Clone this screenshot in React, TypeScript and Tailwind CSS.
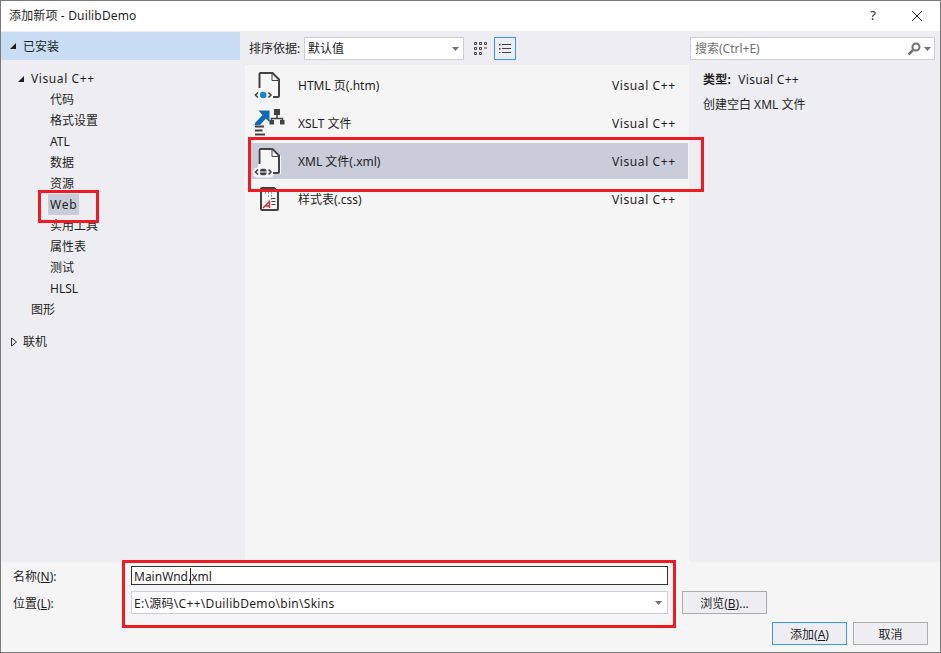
import React from "react";

const FONT = '"Noto Sans", "Noto Sans CJK SC", sans-serif';
const INK = "#424242";
const PAPER = "#f6f6f6";

const Icon = ({ children }: { children: React.ReactNode }) => (
  <svg width="36" height="36" viewBox="0 0 36 36" fill="none">{children}</svg>
);

const HtmlIcon = () => (
  <Icon>
    <path d="M9.500 21V7a1 1 0 0 1 1-1H22.500L29 12.500V29a1 1 0 0 1-1 1H23" fill={PAPER} />
    <path d="M9.500 21V7a1 1 0 0 1 1-1H22.500L29 12.500V29a1 1 0 0 1-1 1H23" stroke={INK} strokeWidth="2" />
    <path d="M22 6.500v7h7" stroke={INK} strokeWidth="1" />
    <path d="M8 25.500L5.500 28 8 30.500M18.500 25.500L21 28l-2.500 2.500" stroke={INK} strokeWidth="1.600" />
    <circle cx="13.200" cy="28" r="3.200" fill="#0e86d4" />
  </Icon>
);

const XsltIcon = () => (
  <Icon>
    <path d="M5 18L12.500 10 8.500 5.500H19.500V17L15.800 13.800 10 20H5z" fill="#1268b3" />
    <rect x="24" y="4" width="6" height="6" fill={INK} />
    <path d="M27 10v3.500M21.500 17v-3.500h11V17" stroke={INK} strokeWidth="1.500" />
    <rect x="19.500" y="15" width="4.500" height="4.500" fill={INK} />
    <rect x="30" y="15" width="4.500" height="4.500" fill={INK} />
    <path d="M5 21.500h9M5 25.500h7.500M5 29.500h10" stroke={INK} strokeWidth="2" />
  </Icon>
);

const XmlIcon = () => (
  <Icon>
    <path d="M8 5h15l8 8v18H8z" fill={PAPER} />
    <rect x="3" y="24.500" width="21" height="10" rx="4.500" fill={PAPER} />
    <path d="M9.500 21V7a1 1 0 0 1 1-1H22.500L29 12.500V29a1 1 0 0 1-1 1H23" stroke={INK} strokeWidth="2" />
    <path d="M22 6.500v7h7" stroke={INK} strokeWidth="1" />
    <path d="M8 26.500L5.500 29 8 31.500M18.500 26.500L21 29l-2.500 2.500" stroke={INK} strokeWidth="1.600" />
    <rect x="10" y="25.800" width="6.500" height="6.400" rx="2" fill={INK} />
    <path d="M10 29h6.500" stroke={PAPER} strokeWidth="1" />
  </Icon>
);

const CssIcon = () => (
  <Icon>
    <path d="M11 8a1 1 0 0 1 1-1h12l4 4v17a1 1 0 0 1-1 1H12a1 1 0 0 1-1-1z" fill={PAPER} stroke={INK} strokeWidth="2" />
    <path d="M15 12h1M18 12h1M21 12h1M18 15h1M21 15h1M21 18h1" stroke={INK} />
    <path d="M21.500 17.500h4M21.500 20.500h4M21.500 23.500h4" stroke={INK} />
    <path d="M13 27L19.500 20.500V27M15.500 25h4" stroke="#d02e3c" strokeWidth="1.400" />
  </Icon>
);

const Caret = ({ open }: { open: boolean }) =>
  open ? (
    <svg width="8" height="8" viewBox="0 0 8 8"><path d="M7 1v6H1z" fill="#1e1e1e" /></svg>
  ) : (
    <svg width="8" height="10" viewBox="0 0 8 10"><path d="M1.500 1l5 4-5 4z" fill="#eeeef2" stroke="#333" /></svg>
  );

const DownTri = () => (
  <svg width="7" height="4" viewBox="0 0 7 4"><path d="M0 0h7L3.500 4z" fill="#717171" /></svg>
);

const treeChildren = ["代码", "格式设置", "ATL", "数据", "资源", "Web", "实用工具", "属性表", "测试", "HLSL"];

const items: { name: string; icon: React.ReactNode; selected?: boolean }[] = [
  { name: "HTML 页(.htm)", icon: <HtmlIcon /> },
  { name: "XSLT 文件", icon: <XsltIcon /> },
  { name: "XML 文件(.xml)", icon: <XmlIcon />, selected: true },
  { name: "样式表(.css)", icon: <CssIcon /> },
];

const RedBox = ({ className }: { className: string }) => (
  <div className={`absolute border-[3px] border-[#ed1c24] pointer-events-none ${className}`} />
);

export default function App() {
  return (
    <div
      className="relative w-[941px] h-[653px] overflow-hidden flex flex-col border-[1px] border-[#7a7a7a] bg-[#f5f5f5] text-[12px] text-[#1e1e1e]"
      style={{ fontFamily: FONT }}
    >
      {/* title bar */}
      <div className="h-[30px] shrink-0 bg-white flex items-center pl-[8px] text-[12px]">
        <span className="flex-1 tracking-[0.15px]">添加新项 - DuilibDemo</span>
        <span className="w-[20px] text-center text-[13px] mr-[28px]">?</span>
        <svg width="12" height="12" viewBox="0 0 12 12" className="mr-[17px]">
          <path d="M1 1l10 10M11 1L1 11" stroke="#1e1e1e" strokeWidth="1" />
        </svg>
      </div>

      {/* main */}
      <div className="h-[531px] shrink-0 flex bg-[#eeeef2]">
        {/* left tree */}
        <div className="w-[244px] shrink-0 pt-[1px]">
          <div className="h-[28px] w-[239px] bg-[#c9def5] flex items-center pl-[8px] gap-[6px]">
            <Caret open />
            <span className="pt-[1px]">已安装</span>
          </div>
          <div className="pt-[8px]">
            <div className="h-[21px] flex items-center pl-[16px] gap-[6px]">
              <Caret open />
              <span className="tracking-[0.6px]">Visual C++</span>
            </div>
            {treeChildren.map((t) => (
              <div key={t} className="h-[21px] flex items-center pl-[47px]">
                <span className={`px-[2px] h-[21px] leading-[21px] ${t === "Web" ? "bg-[#c9ccd9] tracking-[0.8px]" : ""}`}>{t}</span>
              </div>
            ))}
            <div className="h-[21px] flex items-center pl-[30px]">图形</div>
            <div className="h-[21px] mt-[11px] flex items-center pl-[9px] gap-[5px]">
              <Caret open={false} />
              <span>联机</span>
            </div>
          </div>
        </div>

        {/* center */}
        <div className="w-[444px] shrink-0 flex flex-col">
          <div className="h-[34px] shrink-0 flex items-center pl-[4px] pt-[1px]">
            <span className="w-[55px] pt-[1px]">排序依据:</span>
            <div className="w-[160px] h-[23px] bg-white border border-[#cccedb] flex items-center pl-[3px] pr-[4px] justify-between">
              <span className="pt-[1px]">默认值</span>
              <DownTri />
            </div>
            <svg width="14" height="14" viewBox="0 0 14 14" className="ml-[10px]" fill="none" stroke="#424242">
              <path d="M.5.500h2v2h-2zM5.500.500h2v2h-2zM10.500.500h2v2h-2z" />
              <path d="M.5 5.500h2v2h-2zM5.500 5.500h2v2h-2z" />
              <path d="M10 6h3" />
              <path d="M.5 10.500h2v2h-2zM5.500 10.500h2v2h-2z" />
            </svg>
            <div className="ml-[6px] w-[22px] h-[23px] border border-[#3399ff] flex items-center justify-center">
              <svg width="12" height="9" viewBox="0 0 12 9" fill="#424242">
                <path d="M0 0h1.500v1.500H0zM3 0h9v1H3zM0 4h1.500v1.500H0zM3 4h9v1H3zM0 8h1.500v1H0zM3 8h9v1H3z" />
              </svg>
            </div>
          </div>
          <div className="flex-1 bg-[#f5f5f5] pt-[1px] pl-[3px] pr-[1px]">
            {items.map((it) => (
              <div key={it.name} className="h-[38px] flex items-center">
                <div className={`w-[440px] h-[36px] flex items-center ${it.selected ? "bg-[#c9ccd9]" : ""}`}>
                  <div className="w-[50px] h-[36px] flex items-center justify-start shrink-0 pl-[2px]">{it.icon}</div>
                  <span className="flex-1 whitespace-nowrap pt-[2px]">{it.name}</span>
                  <span className="w-[76px] pt-[2px] tracking-[0.6px]">Visual C++</span>
                </div>
              </div>
            ))}
          </div>
        </div>

        {/* right */}
        <div className="flex-1 flex flex-col min-w-0">
          <div className="h-[34px] shrink-0 flex items-center pl-[1px] pt-[1px]">
            <div className="w-[245px] h-[23px] bg-white border border-[#cccedb] flex items-center pl-[4px] pr-[3px] text-[#717171]">
              <span className="flex-1 pt-[1px]">搜索(Ctrl+E)</span>
              <svg width="14" height="14" viewBox="0 0 14 14" fill="none">
                <circle cx="9" cy="5" r="3.500" stroke="#717171" strokeWidth="2" />
                <path d="M6 8L1.500 12.500" stroke="#717171" strokeWidth="2.500" />
              </svg>
              <span className="ml-[3px]"><DownTri /></span>
            </div>
          </div>
          <div className="pl-[14px] pt-[5px]">
            <div className="h-[20px] leading-[20px] mb-[5px] tracking-[0.3px]"><span className="font-bold mr-[7px]">类型:</span>Visual C++</div>
            <div className="h-[20px] leading-[20px]">创建空白 XML 文件</div>
          </div>
        </div>
      </div>

      {/* footer */}
      <div className="flex-1 bg-[#f5f5f5] pt-[4px] relative">
        <div className="flex items-center h-[19px] pl-[12px]">
          <span className="w-[118px] pt-[2px]">名称(<span className="underline">N</span>):</span>
          <div className="w-[537px] h-[19px] bg-white border border-[#333] flex items-center pl-[2px] relative">
            <span className="pt-[2px]">MainWnd.xml</span>
          </div>
        </div>
        <div className="flex items-center h-[23px] pl-[12px] mt-[6px]">
          <span className="w-[118px] pt-[2px]">位置(<span className="underline">L</span>):</span>
          <div className="w-[537px] h-[23px] bg-white border border-[#cccedb] flex items-center pl-[2px] pr-[5px] justify-between">
            <span className="pt-[2px] tracking-[0.3px]">E:\源码\C++\DuilibDemo\bin\Skins</span>
            <DownTri />
          </div>
          <button className="ml-[14px] w-[85px] h-[23px] bg-[#eeeef2] border border-[#acacac] text-center pt-[2px]">
            浏览(<span className="underline">B</span>)...
          </button>
        </div>
        <div className="flex justify-end gap-[6px] pr-[12px] mt-[8px]">
          <button className="w-[75px] h-[23px] bg-[#eeeef2] border border-[#3399ff] text-center pt-[2px]">
            添加(<span className="underline">A</span>)
          </button>
          <button className="w-[75px] h-[23px] bg-[#eeeef2] border border-[#acacac] text-center pt-[2px]">取消</button>
        </div>
      </div>

      {/* text caret in the name box */}
      <div className="absolute left-[189px] top-[567px] w-[1px] h-[17px] bg-[#1e1e1e]" />

      {/* annotation boxes */}
      <RedBox className="left-[37px] top-[189px] w-[61px] h-[33px]" />
      <RedBox className="left-[247px] top-[136px] w-[456px] h-[55px]" />
      <RedBox className="left-[121px] top-[559px] w-[554px] h-[68px]" />
    </div>
  );
}
